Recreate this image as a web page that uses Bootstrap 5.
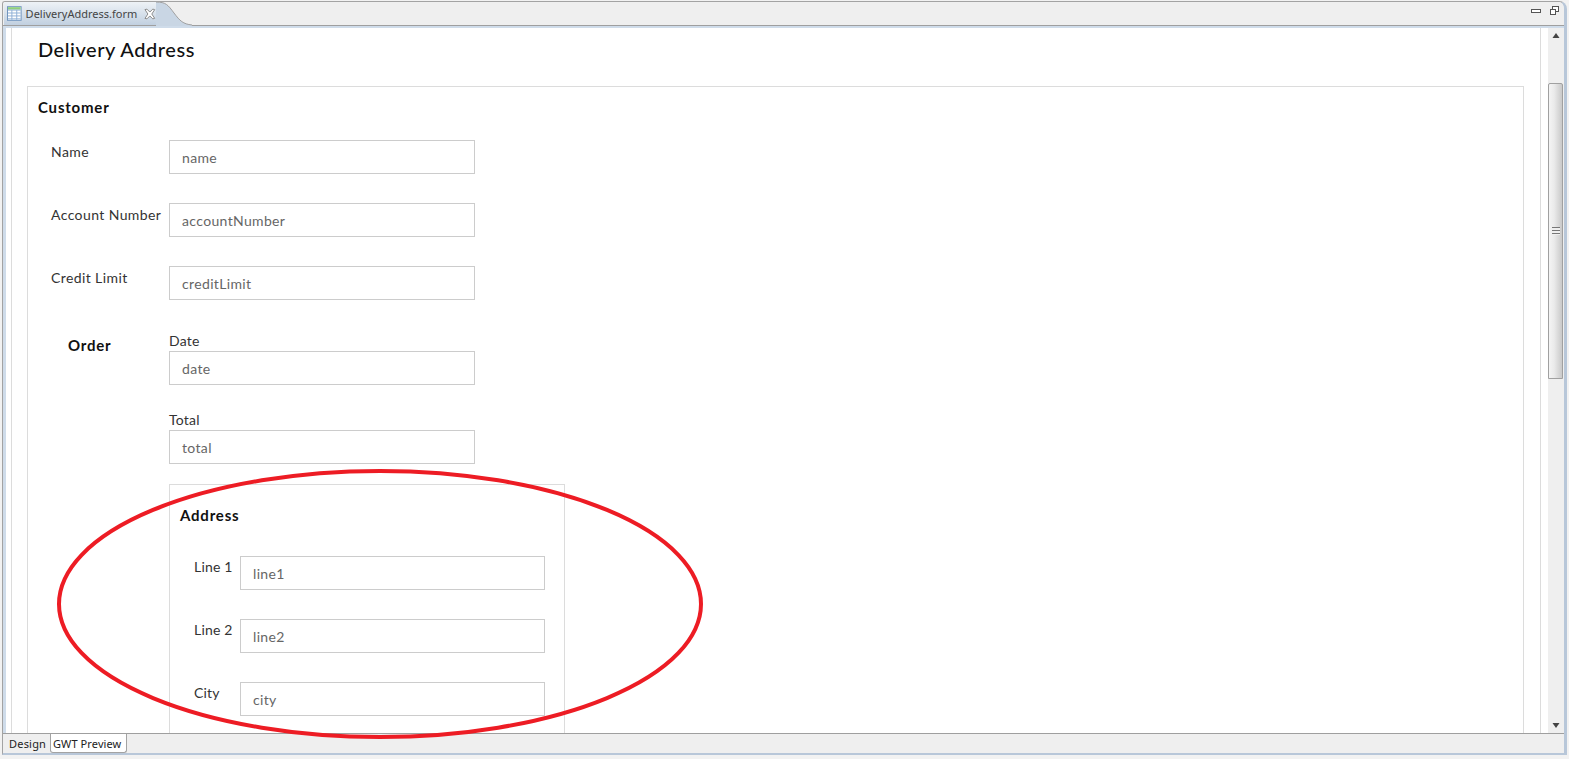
<!DOCTYPE html>
<html lang="en">
<head>
<meta charset="utf-8">
<title>DeliveryAddress.form</title>
<link href="https://cdn.jsdelivr.net/npm/bootstrap@5.3.0/dist/css/bootstrap.min.css" rel="stylesheet">
<style>
html,body{height:100%;overflow:hidden;background:#f2f2f2}
body{font-family:"Lato","Noto Sans",sans-serif;color:#222;position:relative}
.frame{height:754px;width:1565px;margin:1px 0 0 2px;border:1px solid #a3a3a3;border-bottom:2px solid #b8c7d9;border-right:3px solid #b8c7d9;border-radius:3px 8px 0 0;background:#efefef;overflow:hidden}
.tabstrip{height:24px;background:#efefef;border-bottom:1px solid #9f9f9f;flex:none;position:relative}
.edtab{height:23px;width:152px;background:linear-gradient(#eef2f6,#c1d0e0);padding-left:3px;font:11px/23px "Noto Sans",sans-serif;color:#444;gap:4px;margin-left:1px}
.edtab-name{width:114px;white-space:nowrap;margin-right:3px}
.tabcurve{height:24px;width:36px;flex:none}
.winbtns{padding-right:5px;gap:9px}
.mainrow{min-height:0;border-left:3px solid #cfdcea;border-top:2px solid #cfdcea}
.canvas{background:#fff;min-width:0;overflow:hidden;position:relative}
.gutter-l{width:6px;background:#fff;border-right:1px solid #dcdcdc;flex:none}
.sheet{padding:9px 16px 0 15px;height:100%;border-right:1px solid #dcdcdc}
.form-title{font-size:20px;font-weight:500;color:#111;line-height:24px;margin:0 0 25px 11px;letter-spacing:.53px}
.secbox{border:1px solid #dcdcdc;padding:12px 10px 0 10px;height:700px}
.sectitle{font-size:15px;font-weight:700;color:#111;line-height:17px;letter-spacing:.8px}
.customer-title{margin-bottom:24px}
.fieldrow{display:flex;margin-bottom:29px}
.cust-fields{padding-left:13px}
.fieldlabel{width:118px;flex:none;font-size:14px;line-height:17px;color:#333;padding-top:3px;letter-spacing:.4px}
.fieldinput{width:306px;height:34px;border:1px solid #ccc;padding:0 12px;line-height:33px;font-size:14px;color:#666;background:#fff;flex:none;letter-spacing:.35px}
.order-row{display:flex;margin-top:4px}
.order-title{width:118px;flex:none;padding:8px 0 0 17px}
.stacklabel{font-size:14px;line-height:17px;height:22px;color:#333;padding-top:3px;letter-spacing:.2px}
.stackfield{margin-bottom:23px}
.addrbox{width:396px;border:1px solid #dcdcdc;margin-top:-3px;padding:22px 10px 0;height:400px}
.addr-title{margin-bottom:32px}
.addr-row{display:flex;margin-bottom:29px;padding-left:14px}
.addr-row .fieldinput{width:305px}
.addr-label{width:46px;flex:none;font-size:14px;line-height:17px;color:#333;padding-top:2px;white-space:nowrap;letter-spacing:.2px}
.scrolltrack{width:16px;background:#efefef;flex:none;position:relative}
.scrollgap{width:7px;background:#fff;flex:none}
.sarrow{height:17px;width:16px;flex:none}
.sthumb{position:absolute;top:55px;left:0;width:15px;height:296px;border:1px solid #a0a0a0;border-radius:2px 2px 0 0;background:linear-gradient(90deg,#f4f4f4,#eaeaea 40%,#c9c9c9)}
.grip{position:absolute;left:3px;top:143px;width:8px;height:8px;background:repeating-linear-gradient(#777 0 1px,#eee 1px 3px)}
.bottomstrip{height:20px;background:#efefef;border-top:1px solid #9f9f9f;flex:none;font:11px/19px "Noto Sans",sans-serif;color:#222}
.subtab{height:19px;white-space:nowrap}
.subtab-on{width:47px;padding-left:6px;background:#efefef;letter-spacing:.2px}
.subtab-off{width:77px;background:#fff;border:1px solid #a3a3a3;border-top:0;border-radius:0 0 3px 3px;padding:0 2px;letter-spacing:.1px}
.redring{position:absolute;left:50px;top:460px;width:660px;height:285px;pointer-events:none}
</style>
</head>
<body>
<div class="frame d-flex flex-column">
  <div class="tabstrip d-flex align-items-start justify-content-between">
    <div class="d-flex">
      <div class="edtab d-flex align-items-center">
        <svg width="15" height="15" viewBox="0 0 15 15"><rect x=".5" y=".5" width="14" height="14" fill="#fff" stroke="#6f93bd"/><rect x="1" y="1" width="13" height="2.5" fill="#8fd07c"/><path d="M1 4h13M1 7h13M1 10h13M1 13h13M5 4v10M10 4v10" stroke="#8fb0d6"/></svg>
        <span class="edtab-name">DeliveryAddress.form</span>
        <svg width="12" height="12" viewBox="0 0 12 12"><path d="M1 1.500 3 1 6 4 9 1 11 1.500 8 6 11 10.500 9 11 6 8 3 11 1 10.500 4 6Z" fill="#fff" stroke="#8a8a8a"/></svg>
      </div>
      <svg class="tabcurve" viewBox="0 0 36 24"><path d="M0 0C10 0 12 3 18 11C24 19 27 22 36 23V24H0Z" fill="#c9d6e4"/><path d="M0 0C10 0 12 3 18 11C24 19 27 22 36 23" fill="none" stroke="#a0a0a0"/></svg>
    </div>
    <div class="winbtns d-flex align-items-center pt-1">
      <svg width="10" height="6" viewBox="0 0 10 6"><rect x=".5" y="1.500" width="9" height="3" fill="#fff" stroke="#555"/></svg>
      <svg width="9" height="9" viewBox="0 0 9 9"><rect x="2.500" y=".5" width="6" height="5" fill="#fff" stroke="#555"/><rect x=".5" y="3.500" width="5" height="5" fill="#fff" stroke="#555"/></svg>
    </div>
  </div>
  <div class="mainrow d-flex flex-grow-1">
    <div class="gutter-l"></div>
    <div class="canvas flex-grow-1">
      <div class="sheet">
        <div class="form-title">Delivery Address</div>
        <div class="secbox">
          <div class="sectitle customer-title">Customer</div>
          <div class="cust-fields">
            <div class="fieldrow"><div class="fieldlabel">Name</div><div class="fieldinput">name</div></div>
            <div class="fieldrow"><div class="fieldlabel">Account Number</div><div class="fieldinput">accountNumber</div></div>
            <div class="fieldrow"><div class="fieldlabel">Credit Limit</div><div class="fieldinput">creditLimit</div></div>
            <div class="order-row">
              <div class="order-title sectitle">Order</div>
              <div>
                <div class="stackfield"><div class="stacklabel">Date</div><div class="fieldinput">date</div></div>
                <div class="stackfield"><div class="stacklabel">Total</div><div class="fieldinput">total</div></div>
                <div class="addrbox">
                  <div class="sectitle addr-title">Address</div>
                  <div class="addr-row"><div class="addr-label">Line 1</div><div class="fieldinput">line1</div></div>
                  <div class="addr-row"><div class="addr-label">Line 2</div><div class="fieldinput">line2</div></div>
                  <div class="addr-row"><div class="addr-label">City</div><div class="fieldinput">city</div></div>
                </div>
              </div>
            </div>
          </div>
        </div>
      </div>
    </div>
    <div class="scrollgap"></div>
    <div class="scrolltrack d-flex flex-column justify-content-between">
      <svg class="sarrow" viewBox="0 0 16 17"><path d="M8 5 11.500 10H4.500Z" fill="#444"/></svg>
      <div class="sthumb"><div class="grip"></div></div>
      <svg class="sarrow" viewBox="0 0 16 17"><path d="M8 12 4.500 7H11.500Z" fill="#444"/></svg>
    </div>
  </div>
  <div class="bottomstrip d-flex">
    <div class="subtab subtab-on">Design</div>
    <div class="subtab subtab-off">GWT Preview</div>
  </div>
</div>
<svg class="redring" viewBox="0 0 660 285"><ellipse cx="330" cy="144" rx="321" ry="133" fill="none" stroke="#ed1c24" stroke-width="4"/></svg>
<script src="https://cdn.jsdelivr.net/npm/bootstrap@5.3.0/dist/js/bootstrap.bundle.min.js"></script>
</body>
</html>
